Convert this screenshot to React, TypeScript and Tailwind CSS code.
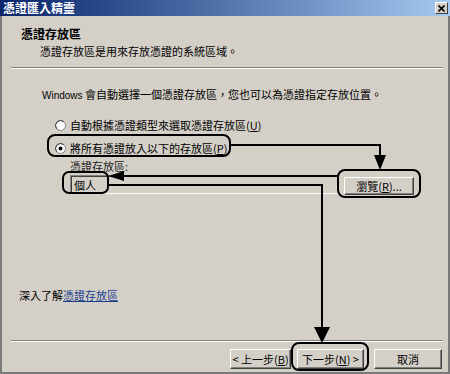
import React from "react";

// ─── Piezas clásicas de Windows ──────────────────────────────────────────────

function Radio({ checked }: { checked?: boolean }) {
  return (
    <svg width="11" height="11" viewBox="0 0 11 11" className="shrink-0">
      <circle cx="5.5" cy="5.5" r="5" fill="#ffffff" stroke="#808080" strokeWidth="1" />
      <path d="M1.6 8.6 A5 5 0 0 1 8.6 1.6" fill="none" stroke="#404040" strokeWidth="1" />
      {checked && <circle cx="5.5" cy="5.5" r="2" fill="#000000" />}
    </svg>
  );
}

function Btn({ w, children }: { w: string; children: React.ReactNode }) {
  return (
    <div
      className={`${w} h-[20px] flex items-center justify-center bg-[#d4d0c8] border border-t-white border-l-white border-b-[#404040] border-r-[#404040] shadow-[inset_-1px_-1px_0_#808080] text-[11px] leading-[14px] text-black`}
    >
      {children}
    </div>
  );
}

// ─── Flechas y marcos de anotación ───────────────────────────────────────────

function Anotaciones() {
  return (
    <svg width="450" height="374" viewBox="0 0 450 374" className="absolute top-0 left-0 pointer-events-none">
      <g fill="none" stroke="#000" strokeWidth="2">
        <rect x="48" y="135" width="182" height="21" rx="7" />
        <rect x="63" y="172" width="45" height="21" rx="6" />
        <rect x="338" y="170" width="82" height="27" rx="7" />
        <rect x="292" y="343" width="76" height="27" rx="7" />
        <polyline points="230,145 380,145 380,157" />
        <polyline points="338,176 122,176" />
        <polyline points="108,185 322,185 322,329" />
      </g>
      <g fill="#000">
        <polygon points="374,155 386,155 380,170" />
        <polygon points="124,171 124,181 108,176" />
        <polygon points="314,327 330,327 322,343" />
      </g>
    </svg>
  );
}

// ─── Página ──────────────────────────────────────────────────────────────────

export default function App() {
  return (
    <div className="relative w-[450px] h-[374px] font-['Noto_Sans_CJK_TC',sans-serif] text-black">
      {/* Barra de título */}
      <div className="h-[16px] flex items-center justify-between bg-gradient-to-r from-[#0a246a] to-[#a6caf0] pl-[3px] pr-[2px]">
        <span className="text-white font-bold text-[12px] leading-[16px]">憑證匯入精靈</span>
        <div className="w-[13px] h-[12px] flex items-center justify-center bg-[#d4d0c8] border border-t-white border-l-white border-b-[#404040] border-r-[#404040]">
          <svg width="7" height="7" viewBox="0 0 7 7">
            <path d="M0.5 0.5 L6.5 6.5 M6.5 0.5 L0.5 6.5" stroke="#000" strokeWidth="1.6" />
          </svg>
        </div>
      </div>

      <div className="h-[358px] bg-[#d4d0c8] border-l-2 border-r-2 border-b-2 border-[#7a7a7a] flex flex-col">
        {/* Encabezado */}
        <div className="pl-[19px] pt-[11px]">
          <div className="text-[12px] font-bold leading-[14px]">憑證存放區</div>
          <div className="mt-[3px] pl-[19px] text-[11px] leading-[14px]">憑證存放區是用來存放憑證的系統區域。</div>
        </div>
        <div className="mt-[9px] ml-[9px] mr-[5px]">
          <div className="h-px bg-[#808080]" />
          <div className="h-px bg-white" />
        </div>

        {/* Cuerpo */}
        <div className="mt-[18px] pl-[40px] text-[11px] leading-[14px]">
          <span className="font-['Liberation_Sans',sans-serif] text-[10px]">Windows</span> 會自動選擇一個憑證存放區，您也可以為憑證指定存放位置。
        </div>

        <div className="mt-[15px] pl-[53px] flex items-center gap-[4px] text-[11px] leading-[14px]">
          <Radio />
          <span>
            自動根據憑證類型來選取憑證存放區(<span className="underline">U</span>)
          </span>
        </div>
        <div className="mt-[9px] pl-[53px] flex items-center gap-[4px] text-[11px] leading-[14px]">
          <Radio checked />
          <span>
            將所有憑證放入以下的存放區(<span className="underline">P</span>)
          </span>
        </div>

        <div className="mt-[4px] pl-[68px] text-[11px] leading-[14px] text-[#222]">憑證存放區:</div>

        <div className="mt-[2px] flex items-start">
          <div className="ml-[68px] w-[268px] h-[19px] border border-t-[#808080] border-l-[#808080] border-b-white border-r-white shadow-[inset_1px_1px_0_#404040] pl-[3px] flex items-center text-[11px] leading-[14px]">
            個人
          </div>
          <div className="ml-[6px] mt-[2px]">
            <div className="w-[70px] h-[18px] flex items-center justify-center bg-[#d4d0c8] border border-t-white border-l-white border-b-[#404040] border-r-[#404040] shadow-[inset_-1px_-1px_0_#808080] text-[11px] leading-[14px]">
              瀏覽(<span className="underline">R</span>)...
            </div>
          </div>
        </div>

        <div className="mt-[93px] pl-[17px] text-[11px] leading-[14px]">
          深入了解<span className="text-[#1a3c8f] underline">憑證存放區</span>
        </div>

        {/* Pie */}
        <div className="mt-[38px] ml-[9px] mr-[5px]">
          <div className="h-px bg-[#808080]" />
          <div className="h-px bg-white" />
        </div>
        <div className="mt-[7px] flex justify-end pr-[6px]">
          <Btn w="w-[61px]">
            &lt; 上一步(<span className="underline">B</span>)
          </Btn>
          <div className="ml-[6px]">
            <Btn w="w-[67px]">
              下一步(<span className="underline">N</span>) &gt;
            </Btn>
          </div>
          <div className="ml-[10px]">
            <Btn w="w-[68px]">取消</Btn>
          </div>
        </div>
      </div>

      <Anotaciones />
    </div>
  );
}
